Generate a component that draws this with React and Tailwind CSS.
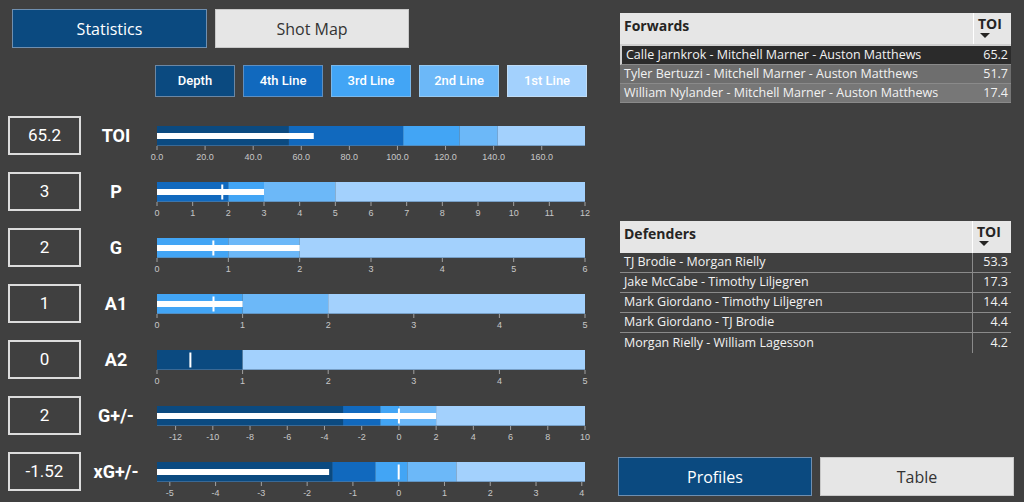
import React from 'react';

const C = {
    depth: '#0b4a80',
    l4: '#1169be',
    l3: '#42a5f5',
    l2: '#6cb8f8',
    l1: '#a3d1fd',
};

const W = 428;

const metrics = [
    {
        value: '65.2', label: 'TOI', min: 0, max: 178, ticks: [0, 20, 40, 60, 80, 100, 120, 140, 160], fmt: (t) => t.toFixed(1),
        segs: [[0, 54.8, C.depth], [54.8, 102.4, C.l4], [102.4, 125.8, C.l3], [125.8, 141.7, C.l2], [141.7, 178, C.l1]],
        bar: 65.2, target: null,
    },
    {
        value: '3', label: 'P', min: 0, max: 12, ticks: [0, 1, 2, 3, 4, 5, 6, 7, 8, 9, 10, 11, 12], fmt: (t) => t,
        segs: [[0, 2, C.l4], [2, 3, C.l3], [3, 5, C.l2], [5, 12, C.l1]],
        bar: 3, target: 1.83,
    },
    {
        value: '2', label: 'G', min: 0, max: 6, ticks: [0, 1, 2, 3, 4, 5, 6], fmt: (t) => t,
        segs: [[0, 1, C.l3], [1, 2, C.l2], [2, 6, C.l1]],
        bar: 2, target: 0.79,
    },
    {
        value: '1', label: 'A1', min: 0, max: 5, ticks: [0, 1, 2, 3, 4, 5], fmt: (t) => t,
        segs: [[0, 1, C.l3], [1, 2, C.l2], [2, 5, C.l1]],
        bar: 1, target: 0.66,
    },
    {
        value: '0', label: 'A2', min: 0, max: 5, ticks: [0, 1, 2, 3, 4, 5], fmt: (t) => t,
        segs: [[0, 1, C.depth], [1, 5, C.l1]],
        bar: 0, target: 0.39,
    },
    {
        value: '2', label: 'G+/-', min: -13, max: 10, ticks: [-12, -10, -8, -6, -4, -2, 0, 2, 4, 6, 8, 10], fmt: (t) => t,
        segs: [[-13, -3, C.depth], [-3, -1, C.l4], [-1, 0, C.l3], [0, 2, C.l2], [2, 10, C.l1]],
        bar: 2, target: 0,
    },
    {
        value: '-1.52', label: 'xG+/-', min: -5.28, max: 4.07, ticks: [-5, -4, -3, -2, -1, 0, 1, 2, 3, 4], fmt: (t) => t,
        segs: [[-5.28, -1.45, C.depth], [-1.45, -0.51, C.l4], [-0.51, 0.19, C.l3], [0.19, 1.26, C.l2], [1.26, 4.07, C.l1]],
        bar: -1.52, target: 0,
    },
];

const forwards = [
    ['Calle Jarnkrok - Mitchell Marner - Auston Matthews', '65.2', 'bg-[#2b2b2b] border-l-2 border-l-[#cfcfcf]'],
    ['Tyler Bertuzzi - Mitchell Marner - Auston Matthews', '51.7', 'bg-[#6e6e6e]'],
    ['William Nylander - Mitchell Marner - Auston Matthews', '17.4', 'bg-[#777777]'],
];

const defenders = [
    ['TJ Brodie - Morgan Rielly', '53.3'],
    ['Jake McCabe - Timothy Liljegren', '17.3'],
    ['Mark Giordano - Timothy Liljegren', '14.4'],
    ['Mark Giordano - TJ Brodie', '4.4'],
    ['Morgan Rielly - William Lagesson', '4.2'],
];

function Bullet({ m }) {
    const sx = (v) => ((v - m.min) / (m.max - m.min)) * W;
    return (
        <svg width={W} height={36} className="overflow-visible block">
            {m.segs.map(([a, b, c], i) => (
                <rect key={i} x={sx(a)} y={0} width={sx(b) - sx(a)} height={20} fill={c} />
            ))}
            <line x1={0} x2={W} y1={19.5} y2={19.5} stroke="#5a7fa3" strokeWidth={1} opacity={0.6} />
            {m.bar > m.min && (
                <rect x={0} y={7} width={sx(m.bar)} height={6} fill="#ffffff" />
            )}
            {m.target !== null && (
                <rect x={sx(m.target) - 1} y={2.5} width={2} height={15} fill="#ffffff" />
            )}
            {m.ticks.map((t) => (
                <g key={t}>
                    <line x1={sx(t)} x2={sx(t)} y1={20} y2={24} stroke="#a0a0a0" strokeWidth={1} />
                    <text x={sx(t)} y={34} textAnchor="middle" fontSize="9" fill="#c8c8c8" fontFamily="'Liberation Sans', sans-serif">
                        {m.fmt(t)}
                    </text>
                </g>
            ))}
        </svg>
    );
}

function Legend({ label, cls }) {
    return (
        <div className={`w-[80px] h-[32px] flex items-center justify-center border text-white text-[13px] font-medium ${cls}`}>
            {label}
        </div>
    );
}

export default function App() {
    return (
        <div className="w-[1024px] h-[502px] bg-[#404040] flex overflow-hidden font-['Roboto',sans-serif]">
            {/* left side */}
            <div className="w-[610px] flex flex-col pl-2">
                <div className="flex gap-2 mt-[9px] ml-1 font-['Open_Sans',sans-serif] text-[16px]">
                    <div className="w-[195px] h-[39px] bg-[#0b4a80] border border-[#6f8fb0] text-white flex items-center justify-center">
                        Statistics
                    </div>
                    <div className="w-[194px] h-[39px] bg-[#e6e6e6] border border-[#c8c8c8] text-[#333333] flex items-center justify-center">
                        Shot Map
                    </div>
                </div>

                <div className="flex gap-2 mt-[17px] ml-[147px]">
                    <Legend label="Depth" cls="bg-[#0b4a80] border-[#6c87a3]" />
                    <Legend label="4th Line" cls="bg-[#1169be] border-[#5f8fc0]" />
                    <Legend label="3rd Line" cls="bg-[#42a5f5] border-[#7ab8ea]" />
                    <Legend label="2nd Line" cls="bg-[#6cb8f8] border-[#97c9f0]" />
                    <Legend label="1st Line" cls="bg-[#a3d1fd] border-[#c0dcf5]" />
                </div>

                <div className="flex flex-col gap-[17px] mt-[19px]">
                    {metrics.map((m) => (
                        <div key={m.label} className="flex items-start h-[39px]">
                            <div className="w-[73px] h-[39px] border-2 border-[#dcdcdc] flex items-center justify-center text-white text-[17px]">
                                {m.value}
                            </div>
                            <div className="w-[70px] h-[39px] flex items-center justify-center text-white text-[18px] font-bold">
                                {m.label}
                            </div>
                            <div className="ml-[6px] mt-[10px]">
                                <Bullet m={m} />
                            </div>
                        </div>
                    ))}
                </div>
            </div>

            {/* right side */}
            <div className="flex-1 flex flex-col pl-2 pr-[10px] font-['Open_Sans',sans-serif]">
                <div className="mt-[13px] ml-[2px] w-[391px]">
                    <div className="flex h-[31px] bg-[#e6e6e6] text-[#252423] font-bold text-[14px]">
                        <div className="flex-1 pl-1 pt-[2px]">Forwards</div>
                        <div className="w-[38px] border-l border-[#ffffff] pl-[4px] pt-[2px] leading-[18px]">
                            TOI
                            <div className="ml-[2px] w-0 h-0 border-l-[5px] border-r-[5px] border-t-[5px] border-l-transparent border-r-transparent border-t-[#252423]" />
                        </div>
                    </div>
                    <div className="border-t-2 border-[#cfcfcf]">
                        {forwards.map(([n, v, bg]) => (
                            <div key={n} className={`flex h-[19px] items-center text-[#f2f2f2] text-[12.5px] border-b border-[#8a8a8a] ${bg}`}>
                                <div className="flex-1 pl-1 whitespace-nowrap">{n}</div>
                                <div className="w-[38px] text-right pr-[3px]">{v}</div>
                            </div>
                        ))}
                    </div>
                </div>

                <div className="mt-[118px] ml-[2px] w-[391px]">
                    <div className="flex h-[32px] bg-[#e6e6e6] text-[#252423] font-bold text-[14px]">
                        <div className="flex-1 pl-1 pt-[2px]">Defenders</div>
                        <div className="w-[39px] border-l border-[#ffffff] pl-[4px] pt-[2px] leading-[18px]">
                            TOI
                            <div className="ml-[2px] w-0 h-0 border-l-[5px] border-r-[5px] border-t-[5px] border-l-transparent border-r-transparent border-t-[#252423]" />
                        </div>
                    </div>
                    {defenders.map(([n, v], i) => (
                        <div key={n} className={`flex h-[20px] items-center text-[#f2f2f2] text-[12.5px] ${i < 4 ? 'border-b border-[#8a8a8a]' : ''}`}>
                            <div className="flex-1 pl-1 whitespace-nowrap">{n}</div>
                            <div className="w-[39px] h-full flex items-center justify-end pr-[3px] border-l border-[#8a8a8a]">{v}</div>
                        </div>
                    ))}
                </div>

                <div className="mt-auto mb-[6px] flex gap-2 text-[16px]">
                    <div className="w-[194px] h-[39px] bg-[#0b4a80] border border-[#6f8fb0] text-white flex items-center justify-center">
                        Profiles
                    </div>
                    <div className="w-[194px] h-[39px] bg-[#e6e6e6] border border-[#c8c8c8] text-[#333333] flex items-center justify-center">
                        Table
                    </div>
                </div>
            </div>
        </div>
    );
}
